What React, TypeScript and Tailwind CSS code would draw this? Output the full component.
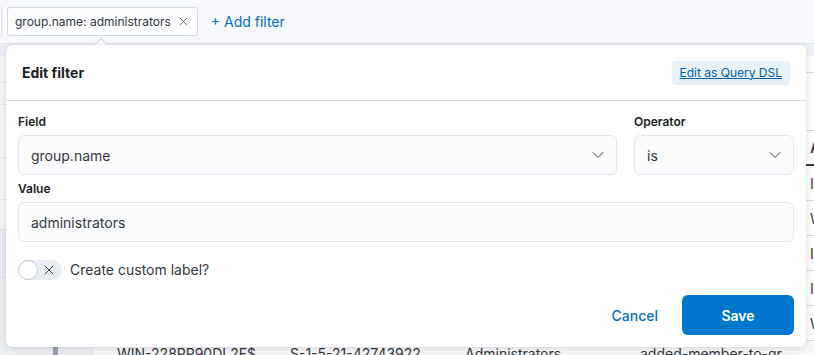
import { X, ChevronDown } from 'lucide-react'

// Only the last column peeks out on the right of the popover
const tail = ['Info', 'Win', 'Info', 'Info', 'Win']

export default function App() {
  return (
    <div
      className="relative w-[814px] h-[355px] overflow-hidden bg-white text-[#343741]"
      style={{ fontFamily: 'Inter, "Liberation Sans", sans-serif' }}
    >
      {/* ── Filter bar ── */}
      <div className="flex items-center h-[44px] bg-[#f7f8fc] border-b border-[#e4e6eb] shadow-[0_1px_2px_rgba(0,0,0,0.06)]">
        <div className="w-[2px] h-[29px] border-r border-y border-[#d3dae6] rounded-r-[3px] bg-white" />
        <div className="ml-[5px] flex items-center h-[29px] px-[7px] gap-[6px] border border-[#d3dae6] rounded-[3px] bg-[#fcfdfe] text-[12px]">
          <span>group.name: administrators</span>
          <X className="w-[13px] h-[13px] text-[#535966]" strokeWidth={1.5} />
        </div>
        <span className="ml-[13px] text-[14px] text-[#0071c2]">+ Add filter</span>
      </div>

      {/* ── Table behind the popover ── */}
      <div className="flex h-[311px] overflow-hidden">
        <div className="w-[93px] shrink-0 flex flex-col bg-[#f3f5f9] border-r border-[#e4e8ef]">
          <div className="h-[12px] shrink-0 bg-[#eceff5]" />
          <div className="h-[27px] shrink-0 border-b border-[#e0e5ee]" />
          <div className="h-[22px] shrink-0 border-b border-[#e0e5ee]" />
          <div className="h-[53px] shrink-0 border-b border-[#e0e5ee]" />
          <div className="h-[42px] shrink-0 border-b border-[#e0e5ee]" />
          <div className="h-[30px] shrink-0 border-b border-[#e0e5ee]" />
          <div className="h-[48px] shrink-0 bg-[#e9ecf2] border-b border-[#e0e5ee]" />
          <div className="flex-1 flex bg-[#eceff4]">
            <div className="w-[53px]" />
            <div className="w-[5px] bg-[#98a2b3]" />
          </div>
        </div>
        <div className="flex-1 flex flex-col">
          <div className="h-[12px] shrink-0 bg-[#eef1f6]" />
          <div className="h-[17px] shrink-0 border-b border-[#d3dae6]" />
          <div className="h-[58px] shrink-0 border-b border-[#d3dae6]" />
          <div className="flex items-center shrink-0 h-[35px] border-b-2 border-[#343741] text-[14px] font-semibold">
            <span className="ml-[717px]">Action</span>
          </div>
          {tail.map((t, i) => (
            <div key={i} className="flex items-center h-[35px] shrink-0 border-b border-[#d3dae6] text-[14px]">
              <span className="ml-[717px]">{t}</span>
            </div>
          ))}
          <div className="flex items-center h-[24px] shrink-0 bg-[#f7f8fa] text-[14px] whitespace-nowrap">
            <span className="ml-[24px] w-[173px]">WIN-228PP90DL2F$</span>
            <span className="w-[175px]">S-1-5-21-42743922</span>
            <span className="w-[175px]">Administrators</span>
            <span className="w-[170px]">added-member-to-gr</span>
          </div>
        </div>
      </div>

      {/* ── Edit filter popover ── */}
      <div className="absolute left-[96px] top-[40px] w-[10px] h-[10px] rotate-45 bg-white border-l border-t border-[#d3dae6]" />
      <div className="absolute left-[6px] top-[45px] w-[800px] h-[302px] flex flex-col bg-white rounded-[6px] shadow-[0_2px_10px_rgba(0,0,0,0.12),0_0_1px_rgba(0,0,0,0.2)]">
        <div className="flex items-center justify-between h-[56px] pl-[16px] pr-[16px] border-b border-[#d3dae6]">
          <span className="text-[14px] font-bold text-[#1a1c21]">Edit filter</span>
          <button className="h-[24px] px-[8px] rounded-[4px] bg-[#e6f1fa] text-[12px] text-[#0061a6] underline">
            Edit as Query DSL
          </button>
        </div>

        <div className="flex-1 flex flex-col px-[12px] pt-[12px] pb-[12px]">
          <div className="flex gap-[17px]">
            <div className="flex-1 flex flex-col gap-[4px]">
              <label className="h-[18px] text-[12px] font-semibold text-[#1a1c21] leading-[18px]">Field</label>
              <div className="flex items-center justify-between h-[40px] pl-[12px] pr-[8px] bg-[#fbfcfd] border border-[#e4e7f0] rounded-[6px] text-[14px]">
                <span>group.name</span>
                <ChevronDown className="w-[20px] h-[20px] text-[#343741]" strokeWidth={1.1} />
              </div>
            </div>
            <div className="w-[160px] flex flex-col gap-[4px]">
              <label className="h-[18px] text-[12px] font-semibold text-[#1a1c21] leading-[18px]">Operator</label>
              <div className="flex items-center justify-between h-[40px] pl-[12px] pr-[8px] bg-[#fbfcfd] border border-[#e4e7f0] rounded-[6px] text-[14px]">
                <span>is</span>
                <ChevronDown className="w-[20px] h-[20px] text-[#343741]" strokeWidth={1.1} />
              </div>
            </div>
          </div>

          <div className="mt-[5px] flex flex-col gap-[4px]">
            <label className="h-[18px] text-[12px] font-semibold text-[#1a1c21] leading-[18px]">Value</label>
            <div className="flex items-center h-[40px] pl-[12px] bg-[#fbfcfd] border border-[#e4e7f0] rounded-[6px] text-[14px]">
              administrators
            </div>
          </div>

          <div className="mt-[17px] flex items-center gap-[8px]">
            <div className="relative w-[44px] h-[20px] rounded-full bg-[#e9edf3]">
              <div className="absolute left-0 top-0 w-[20px] h-[20px] rounded-full bg-white border border-[#c2c8d2]" />
              <X className="absolute left-[23px] top-[2px] w-[16px] h-[16px] text-[#343741]" strokeWidth={1.4} />
            </div>
            <span className="text-[14px]">Create custom label?</span>
          </div>

          <div className="mt-auto flex items-center justify-end gap-[24px]">
            <span className="text-[14px] font-medium text-[#0071c2]">Cancel</span>
            <button className="w-[112px] h-[40px] rounded-[6px] bg-[#0077cc] text-white text-[14px] font-semibold">
              Save
            </button>
          </div>
        </div>
      </div>
    </div>
  )
}
